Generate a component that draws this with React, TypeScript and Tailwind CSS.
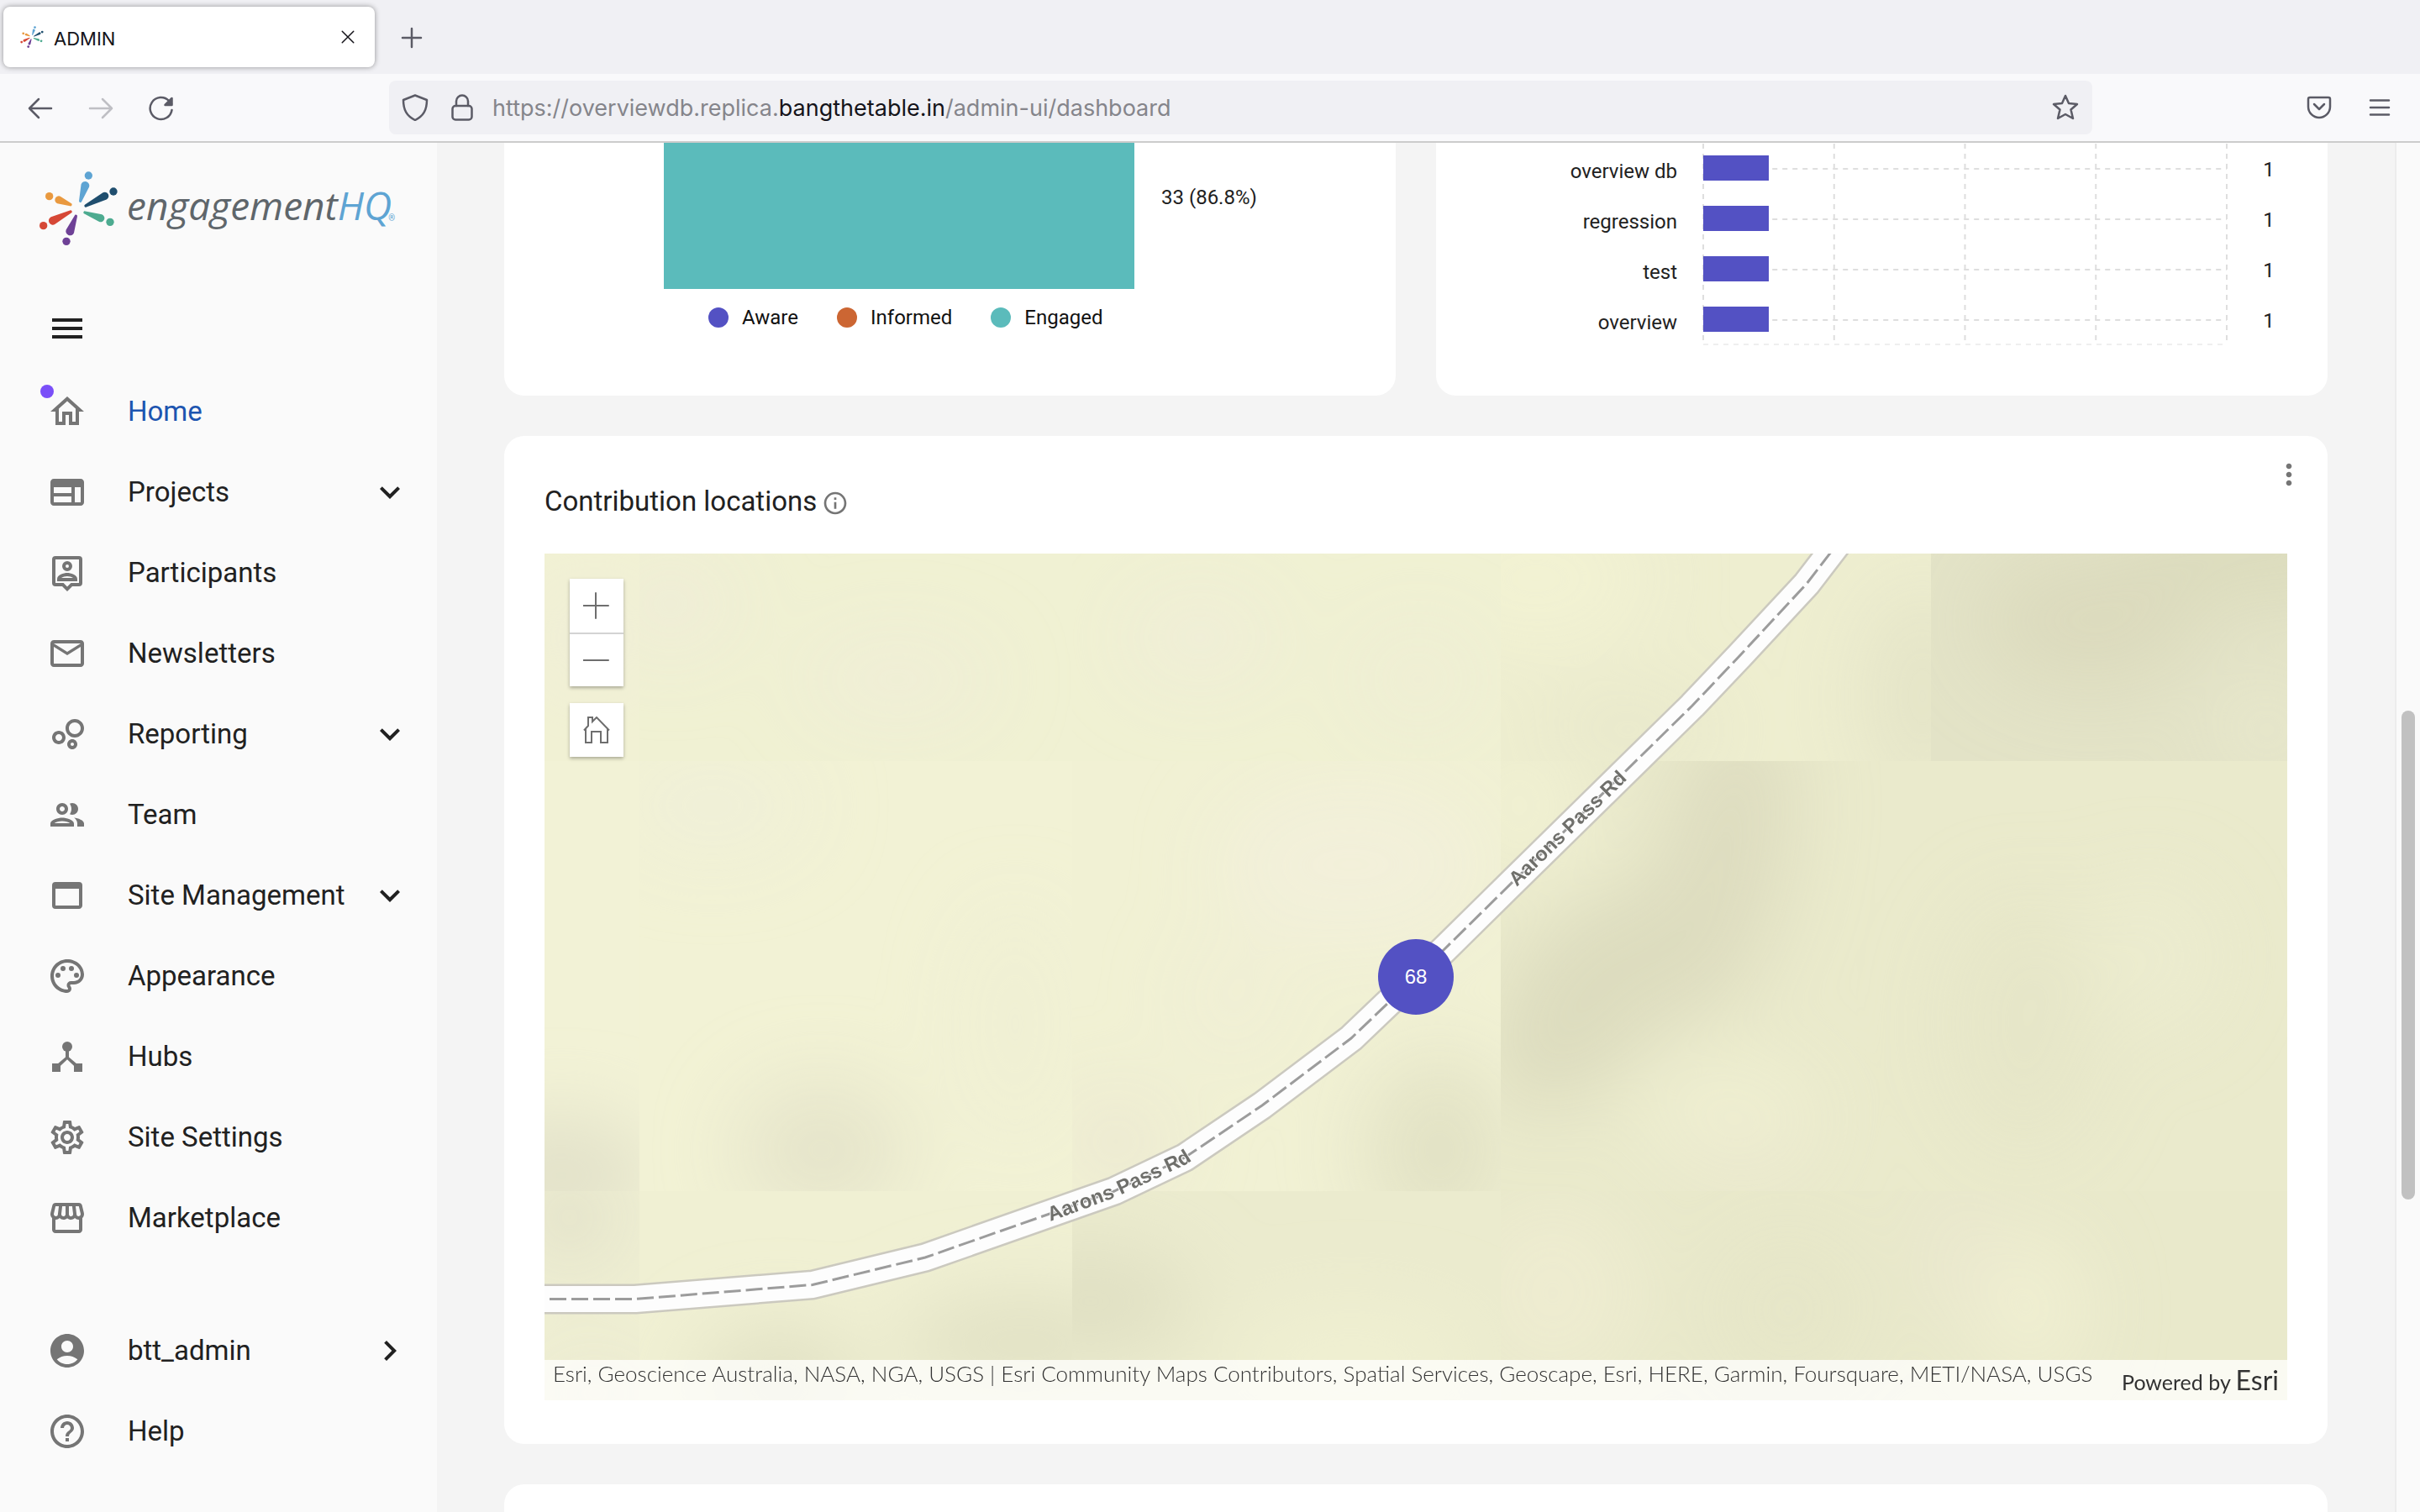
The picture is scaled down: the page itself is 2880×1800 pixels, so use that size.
import type { ReactNode } from "react";
import {
  MdOutlineHome,
  MdOutlineWeb,
  MdMailOutline,
  MdOutlineBubbleChart,
  MdOutlineWebAsset,
  MdOutlinePalette,
  MdOutlineSettings,
  MdOutlineStorefront,
  MdAccountCircle,
  MdHelpOutline,
  MdOutlineInfo,
  MdKeyboardArrowDown,
  MdKeyboardArrowRight,
  MdMenu,
  MdMoreVert,
} from "react-icons/md";

type Petal = { c: string; n: number[]; w: number[]; d: number[] };

const petals: Petal[] = [
  { c: "#5ea4d3", n: [169, 149, 5], w: [186, 94, 15], d: [198, 58] },
  { c: "#1f4e6e", n: [188, 166, 5], w: [256, 131, 14], d: [287, 115] },
  { c: "#4dab90", n: [185, 190, 5], w: [241, 210, 14], d: [275, 224] },
  { c: "#6e4196", n: [153, 203, 5], w: [132, 257, 15], d: [119, 293] },
  { c: "#d64836", n: [134, 187, 5], w: [71, 219, 15], d: [37, 237] },
  { c: "#e9993f", n: [134, 162, 5], w: [92, 145, 14], d: [58, 132] },
];

function petalPath({ n, w }: Petal) {
  const dx = w[0] - n[0];
  const dy = w[1] - n[1];
  const len = Math.hypot(dx, dy);
  const px = -dy / len;
  const py = dx / len;
  return `M${n[0] + px * n[2]} ${n[1] + py * n[2]}L${w[0] + px * w[2]} ${w[1] + py * w[2]}A${w[2]} ${w[2]} 0 0 0 ${w[0] - px * w[2]} ${w[1] - py * w[2]}L${n[0] - px * n[2]} ${n[1] - py * n[2]}A${n[2]} ${n[2]} 0 0 0 ${n[0] + px * n[2]} ${n[1] + py * n[2]}Z`;
}

function Burst({ className }: { className: string }) {
  return (
    <svg viewBox="20 40 285 270" className={className} aria-hidden="true">
      {petals.map((p) => (
        <g key={p.c} fill={p.c}>
          <path d={petalPath(p)} />
          <circle cx={p.d[0]} cy={p.d[1]} r="14" />
        </g>
      ))}
    </svg>
  );
}

function Line({ children, className = "size-8", width = 2.5 }: { children: ReactNode; className?: string; width?: number }) {
  return (
    <svg
      viewBox="0 0 32 32"
      className={className}
      fill="none"
      stroke="currentColor"
      strokeWidth={width}
      strokeLinecap="round"
      strokeLinejoin="round"
      aria-hidden="true"
    >
      {children}
    </svg>
  );
}

function ParticipantsIcon() {
  return (
    <svg viewBox="0 0 24 24" className="size-12" fill="currentColor" aria-hidden="true">
      <path fillRule="evenodd" d="M19 2H5a2 2 0 0 0-2 2v14a2 2 0 0 0 2 2h4l3 3 3-3h4a2 2 0 0 0 2-2V4a2 2 0 0 0-2-2zm0 16h-4.8L12 20.2 9.8 18H5V4h14z" />
      <path fillRule="evenodd" d="M12 11a3 3 0 1 0 0-6 3 3 0 0 0 0 6zm0-4a1 1 0 1 1 0 2 1 1 0 0 1 0-2z" />
      <path fillRule="evenodd" d="M18 15.6c0-2.500-4-3.600-6-3.600s-6 1.100-6 3.600V17h12zM8.500 15c.7-.6 2.300-1 3.500-1s2.800.4 3.500 1z" />
    </svg>
  );
}

function TeamIcon() {
  return (
    <svg viewBox="0 0 24 24" className="size-12" fill="currentColor" aria-hidden="true">
      <path d="M9 13.75c-2.34 0-7 1.17-7 3.5V19h14v-1.75c0-2.33-4.66-3.5-7-3.5zM4.34 17c.84-.58 2.87-1.25 4.66-1.25s3.82.67 4.66 1.25H4.34zM9 12c1.93 0 3.5-1.57 3.5-3.5S10.93 5 9 5 5.5 6.57 5.5 8.5 7.07 12 9 12zm0-5c.83 0 1.5.67 1.5 1.5S9.83 10 9 10s-1.5-.67-1.5-1.5S8.17 7 9 7zm7.04 6.81c1.16.84 1.96 1.96 1.96 3.44V19h4v-1.75c0-2.02-3.5-3.17-5.96-3.44zM15 12c1.93 0 3.5-1.57 3.5-3.5S16.93 5 15 5c-.54 0-1.04.13-1.5.35.63.89 1 1.98 1 3.15s-.37 2.26-1 3.15c.46.22.96.35 1.5.35z" />
    </svg>
  );
}

function HubsIcon() {
  return (
    <svg viewBox="0 0 24 24" className="size-12" fill="currentColor" aria-hidden="true">
      <circle cx="12" cy="6" r="3" />
      <rect x="3" y="16" width="5" height="5" />
      <rect x="16" y="16" width="5" height="5" />
      <path d="M11 8h2v4.200l5 4.300-1.400 1.500L12 13.600 7.400 18 6 16.500l5-4.300z" />
    </svg>
  );
}

type NavEntry = { label: string; icon: ReactNode; arrow?: "down" | "right"; active?: boolean };

const ic = "size-12";

const mainNav: NavEntry[] = [
  { label: "Home", icon: <MdOutlineHome className={ic} />, active: true },
  { label: "Projects", icon: <MdOutlineWeb className={ic} />, arrow: "down" },
  { label: "Participants", icon: <ParticipantsIcon /> },
  { label: "Newsletters", icon: <MdMailOutline className={ic} /> },
  { label: "Reporting", icon: <MdOutlineBubbleChart className={ic} />, arrow: "down" },
  { label: "Team", icon: <TeamIcon /> },
  { label: "Site Management", icon: <MdOutlineWebAsset className={ic} />, arrow: "down" },
  { label: "Appearance", icon: <MdOutlinePalette className={ic} /> },
  { label: "Hubs", icon: <HubsIcon /> },
  { label: "Site Settings", icon: <MdOutlineSettings className={ic} /> },
  { label: "Marketplace", icon: <MdOutlineStorefront className={ic} /> },
];

const footNav: NavEntry[] = [
  { label: "btt_admin", icon: <MdAccountCircle className={ic} />, arrow: "right" },
  { label: "Help", icon: <MdHelpOutline className={ic} /> },
];

function NavList({ items }: { items: NavEntry[] }) {
  return (
    <ul>
      {items.map((it) => (
        <li key={it.label}>
          <a href="#" className="flex h-24 items-center pr-8 pl-14">
            <span className="relative text-[#757575]">
              {it.icon}
              {it.active && <span className="absolute -top-2 -left-2 size-4 rounded-full bg-[#7a4ff8]" />}
            </span>
            <span className={`ml-12 grow text-[33px] leading-10 whitespace-nowrap ${it.active ? "text-[#1d55b0]" : "text-[#212121]"}`}>
              {it.label}
            </span>
            {it.arrow === "down" && <MdKeyboardArrowDown className="size-12 text-[#212121]" />}
            {it.arrow === "right" && <MdKeyboardArrowRight className="size-12 text-[#212121]" />}
          </a>
        </li>
      ))}
    </ul>
  );
}

function BrowserChrome() {
  return (
    <header className="shrink-0 border-b-2 border-[#cccccc] font-['Inter',sans-serif] text-[#5b5b66]">
      <div className="flex h-22 items-center bg-[#f0f0f4] px-1">
        <div className="flex h-18 w-[442px] items-center rounded-lg bg-white px-5 shadow-[0_0_6px_rgba(0,0,0,0.4)]">
          <Burst className="size-7" />
          <span className="ml-3 grow pt-1 text-[22px] leading-7 text-[#15141a]">ADMIN</span>
          <button type="button" aria-label="Close tab" className="text-[#15141a]">
            <Line className="size-6" width={2}>
              <path d="M7 7l18 18M25 7L7 25" />
            </Line>
          </button>
        </div>
        <button type="button" aria-label="New tab" className="ml-7 pt-0.5">
          <Line>
            <path d="M16 5v22M5 16h22" />
          </Line>
        </button>
      </div>
      <div className="flex h-20 items-center bg-[#f9f9fb] px-8">
        <div className="flex w-[431px] gap-10 pt-0.5">
          <button type="button" aria-label="Back">
            <Line>
              <path d="M29 16H3M14 5L3 16l11 11" />
            </Line>
          </button>
          <button type="button" aria-label="Forward" className="text-[#bfbfc4]">
            <Line>
              <path d="M3 16h26M18 5l11 11-11 11" />
            </Line>
          </button>
          <button type="button" aria-label="Reload">
            <Line>
              <path d="M28.500 18A13 13 0 1 1 25 7l3 3.500" />
              <path d="M28.500 4v8h-8z" fill="currentColor" />
            </Line>
          </button>
        </div>
        <div className="flex h-16 grow items-center rounded-lg bg-[#f0f0f4] pr-4 pl-[15px]">
          <Line>
            <path d="M16 1.500L30 7c0 12-4 19-14 24C6 26 2 19 2 7z" />
          </Line>
          <Line className="ml-6 size-8">
            <path d="M9 14V8.500a7 7 0 0 1 14 0V14" />
            <rect x="4.500" y="14" width="23" height="16.500" rx="3.500" />
          </Line>
          <a href="#" className="ml-5 grow pt-0.5 text-[27px] leading-8 text-[#85858b]">
            https://overviewdb.replica.<span className="text-[#15141a]">bangthetable.in</span>/admin-ui/dashboard
          </a>
          <button type="button" aria-label="Bookmark this page">
            <Line>
              <path d="M16 2l4 9 10 1-7.500 6.500L25 29l-9-5-9 5 2.500-10.500L2 12l10-1z" />
            </Line>
          </button>
        </div>
        <div className="ml-[254px] flex gap-10">
          <button type="button" aria-label="Save to Pocket">
            <Line>
              <path d="M3 6a2 2 0 0 1 2-2h22a2 2 0 0 1 2 2v9a13 13 0 0 1-26 0z" />
              <path d="M10 12l6 6 6-6" />
            </Line>
          </button>
          <button type="button" aria-label="Open menu">
            <Line>
              <path d="M5 7.500h22M5 16h22M5 24.500h22" />
            </Line>
          </button>
        </div>
      </div>
    </header>
  );
}

const legend = [
  { label: "Aware", dot: "bg-[#5351c3]" },
  { label: "Informed", dot: "bg-[#cc6633]" },
  { label: "Engaged", dot: "bg-[#5bbbbb]" },
];

function FunnelCard() {
  return (
    <section className="rounded-b-3xl bg-white pb-[79px] pl-[190px] text-[24px] leading-7">
      <div className="flex items-center">
        <div className="h-[218px] w-[560px] bg-[#5bbbbb]" />
        <span className="ml-8 text-[#212121]">33 (86.8%)</span>
      </div>
      <ul className="mt-5 ml-[53px] flex gap-[46px] text-[#111111]">
        {legend.map((l) => (
          <li key={l.label} className="flex items-center gap-4">
            <span className={`size-6 rounded-full ${l.dot}`} />
            {l.label}
          </li>
        ))}
      </ul>
    </section>
  );
}

const tags = [
  { label: "overview db", count: 1 },
  { label: "regression", count: 1 },
  { label: "test", count: 1 },
  { label: "overview", count: 1 },
];

function TagsCard() {
  return (
    <section className="grid grid-cols-[287px_minmax(0,1fr)_120px] rounded-b-3xl bg-white pt-11 text-[24px] leading-7 text-[#212121]">
      <ul className="text-right">
        {tags.map((t) => (
          <li key={t.label} className="flex h-15 items-center justify-end pt-2">
            {t.label}
          </li>
        ))}
      </ul>
      <div className="relative ml-[31px] h-60">
        <svg className="absolute inset-0 size-full overflow-visible" stroke="#dedede" aria-hidden="true">
          {[0, 25, 50, 75, 100].map((x) => (
            <line key={x} x1={`${x}%`} x2={`${x}%`} y1="1" y2="240" strokeWidth="2" strokeDasharray="6 6" />
          ))}
          {[31, 91, 151, 211].map((y) => (
            <line key={y} x1="13.200%" x2="100%" y1={y} y2={y} strokeWidth="2" strokeDasharray="6 6" />
          ))}
          <line x1="0" x2="100%" y1="240" y2="240" strokeWidth="1" strokeDasharray="6 6" />
        </svg>
        {tags.map((t) => (
          <div key={t.label} className="relative flex h-15 items-center">
            <div className="h-[30px] bg-[#5351c3]" style={{ width: `${(t.count / 8) * 100}%` }} />
          </div>
        ))}
      </div>
      <ul className="pr-5 text-center">
        {tags.map((t) => (
          <li key={t.label} className="flex h-15 items-center justify-center pt-1">
            {t.count}
          </li>
        ))}
      </ul>
    </section>
  );
}

const ROAD =
  "M-20 887.500L108 887.500L319 870.500L453 838L678 759L762 719L854 657L960 577L1071 471L1145 398L1366 181L1423 121L1502 36L1545 -20";

type Shade = [number, number, number, number, string, number, number?];

const tileShades: { x: number; y: number; w: number; h: number; fill: string; spots: Shade[] }[] = [
  { x: 0, y: 0, w: 113, h: 247, fill: "#f1f1d4", spots: [[60, 100, 70, 60, "#efecd8", 0.7]] },
  { x: 113, y: 0, w: 515, h: 247, fill: "#f0f1d3", spots: [[150, 60, 80, 60, "#efecd8", 0.8], [420, 150, 110, 50, "#f0edd8", 0.7]] },
  { x: 628, y: 0, w: 510, h: 247, fill: "#f0f1d3", spots: [[780, 100, 90, 60, "#f0edd8", 0.7], [1040, 150, 80, 70, "#efecd6", 0.6]] },
  { x: 1138, y: 0, w: 512, h: 247, fill: "#eeeed0", spots: [[1180, 30, 130, 80, "#f2f2d3", 1], [1290, 210, 100, 40, "#e7e7ca", 0.9], [1640, 170, 70, 130, "#e4e4c7", 1]] },
  { x: 1650, y: 0, w: 424, h: 247, fill: "#e3e3c7", spots: [[1840, 80, 130, 80, "#dbdabd", 1], [2050, 0, 160, 50, "#dadabb", 1], [2050, 210, 70, 60, "#e9e9cd", 0.8]] },
  { x: 0, y: 247, w: 113, h: 512, fill: "#f2f2d6", spots: [[20, 740, 110, 70, "#e2e1c9", 1]] },
  { x: 113, y: 247, w: 515, h: 512, fill: "#f2f2d5", spots: [[200, 300, 110, 60, "#f0efd8", 0.9], [330, 710, 100, 80, "#e5e4ca", 1], [560, 560, 60, 140, "#efefd3", 0.8]] },
  { x: 628, y: 247, w: 510, h: 512, fill: "#f1f1d4", spots: [[960, 370, 160, 100, "#f2efda", 0.9], [820, 530, 60, 70, "#f0eed6", 0.7], [1065, 710, 90, 110, "#e2e2c5", 1], [680, 700, 70, 60, "#ece9d2", 0.9]] },
  { x: 1138, y: 247, w: 936, h: 512, fill: "#eaeacc", spots: [[1160, 300, 80, 100, "#f0f0d2", 1], [1400, 370, 75, 190, "#dddcbf", 1, 12], [1240, 530, 85, 150, "#dcdbbe", 1, 38], [1410, 660, 110, 60, "#efefd1", 0.9], [1760, 560, 90, 150, "#e6e6c8", 0.9], [1910, 480, 80, 90, "#ededd0", 0.7], [1430, 720, 80, 30, "#ebe7d0", 0.8]] },
  { x: 0, y: 759, w: 113, h: 249, fill: "#efefd3", spots: [[30, 790, 60, 60, "#e2e1c9", 1], [60, 1000, 80, 30, "#e9e7cf", 0.9]] },
  { x: 113, y: 759, w: 515, h: 249, fill: "#f0f0d3", spots: [[280, 990, 100, 70, "#e1e1c4", 1], [570, 940, 150, 60, "#e1e1c4", 1]] },
  { x: 628, y: 759, w: 510, h: 249, fill: "#ebebce", spots: [[650, 890, 120, 60, "#dfdfc2", 1], [960, 960, 150, 60, "#f0f0d2", 1]] },
  { x: 1138, y: 759, w: 936, h: 249, fill: "#e9e9cb", spots: [[1200, 880, 100, 110, "#eeecd0", 0.9], [1480, 900, 90, 90, "#e5e5c8", 0.9], [1770, 900, 60, 90, "#f0efd2", 1], [1680, 830, 25, 90, "#ebe7d1", 0.9]] },
];

function MapCanvas() {
  return (
    <svg viewBox="0 0 2074 1008" preserveAspectRatio="xMidYMid slice" className="absolute inset-0 size-full" role="img" aria-label="Map of Aarons Pass Rd">
      <defs>
        <filter id="soft" filterUnits="userSpaceOnUse" x="-300" y="-300" width="2700" height="1600">
          <feGaussianBlur stdDeviation="46" />
        </filter>
        {tileShades.map((t, i) => (
          <clipPath key={i} id={`tile${i}`}>
            <rect x={t.x} y={t.y} width={t.w} height={t.h} />
          </clipPath>
        ))}
        <path id="labelLow" d="M602 795L678 767L762 728L800 704" />
        <path id="labelHigh" d="M1157 397L1377 183" />
      </defs>
      {tileShades.map((t, i) => (
        <g key={i} clipPath={`url(#tile${i})`}>
          <rect x={t.x} y={t.y} width={t.w} height={t.h} fill={t.fill} />
          <g filter="url(#soft)">
            {t.spots.map(([cx, cy, rx, ry, fill, opacity, rot = 0], j) => (
              <ellipse key={j} cx={cx} cy={cy} rx={rx} ry={ry} fill={fill} opacity={opacity} transform={`rotate(${rot} ${cx} ${cy})`} />
            ))}
          </g>
        </g>
      ))}
      <path d={ROAD} fill="none" stroke="#cbc9bf" strokeWidth="36" strokeLinejoin="round" />
      <path d={ROAD} fill="none" stroke="#fdfdfd" strokeWidth="31" strokeLinejoin="round" />
      <path d={ROAD} fill="none" stroke="#9c9c9c" strokeWidth="3" strokeDasharray="20 6" />
      <g fill="#6f6f6b" stroke="#fdfdfd" strokeWidth="2" paintOrder="stroke" className="font-['Liberation_Sans',sans-serif] text-[24px] font-bold">
        <text>
          <textPath href="#labelLow">Aarons Pass Rd</textPath>
        </text>
        <text>
          <textPath href="#labelHigh">Aarons Pass Rd</textPath>
        </text>
      </g>
    </svg>
  );
}

const mapButton = "flex h-16 w-16 items-center justify-center bg-white";

function MapCard() {
  return (
    <section className="relative mt-12 rounded-3xl bg-white px-12 pt-12 pb-13">
      <button type="button" aria-label="More options" className="absolute top-[26px] right-[26px] text-[#757575]">
        <MdMoreVert className="size-10" />
      </button>
      <div className="flex h-15 items-center">
        <h2 className="text-[33px] leading-10 text-[#212121]">Contribution locations</h2>
        <MdOutlineInfo className="mt-1 ml-1.5 size-8 text-[#757575]" />
      </div>
      <div className="relative mt-8 flex h-[1008px] flex-col justify-between overflow-hidden">
        <MapCanvas />
        <div className="relative ml-[30px] flex w-16 flex-col pt-[30px] text-[#6e6e6e]">
          <div className="shadow-[0_2px_4px_rgba(0,0,0,0.3)]">
            <button type="button" aria-label="Zoom in" className={mapButton}>
              <Line width={2}>
                <path d="M15 1v30M0 16h30" />
              </Line>
            </button>
            <button type="button" aria-label="Zoom out" className="flex h-16 w-16 items-center justify-center border-t-2 border-[#d3d3d3] bg-white">
              <Line width={2}>
                <path d="M0 16h30" />
              </Line>
            </button>
          </div>
          <button type="button" aria-label="Default map view" className="mt-5 flex h-16 w-16 items-center justify-center bg-white shadow-[0_2px_4px_rgba(0,0,0,0.3)]">
            <svg viewBox="0 0 32 32" className="size-8" fill="none" stroke="currentColor" strokeWidth="2" aria-hidden="true">
              <path d="M1 16.500L6 11V1h5v5l5-5 15 15.500M3 15v16h7V18h11v13h8V14" />
            </svg>
          </button>
        </div>
        <button
          type="button"
          aria-label="68 contributions"
          className="absolute top-1/2 left-1/2 flex size-[90px] -translate-1/2 items-center justify-center rounded-full bg-[#5351c3] font-['Liberation_Sans',sans-serif] text-[24px] leading-7 text-white"
        >
          68
        </button>
        <div className="relative flex h-12 justify-between bg-white/75 px-[10px] font-['Lato',sans-serif] text-[#323232]">
          <span className="text-[26px] leading-8 font-light whitespace-nowrap">
            Esri, Geoscience Australia, NASA, NGA, USGS | Esri Community Maps Contributors, Spatial Services, Geoscape, Esri, HERE, Garmin, Foursquare, METI/NASA, USGS
          </span>
          <span className="text-[25px] leading-12 whitespace-nowrap">
            Powered by{" "}
            <a href="#" className="text-[32px]">
              Esri
            </a>
          </span>
        </div>
      </div>
    </section>
  );
}

export default function App() {
  return (
    <div className="flex h-screen flex-col overflow-hidden bg-[#f4f4f4] font-['Roboto',sans-serif]">
      <BrowserChrome />
      <div className="flex min-h-0 grow">
        <nav className="w-[520px] shrink-0 bg-[#fafafa] pt-8" aria-label="Main">
          <a href="#" className="flex h-24 items-center pb-1 pl-[46px]" aria-label="engagementHQ home">
            <Burst className="h-[90px] w-[95px]" />
            <span className="ml-2.5 pb-2 font-['Open_Sans',sans-serif] text-[46px] leading-none font-medium whitespace-nowrap text-[#5f666b] italic">
              engagement<span className="text-[#5ea4d3]">HQ</span>
            </span>
            <span className="mt-6 -ml-1 text-[10px] leading-none text-[#5ea4d3]">®</span>
          </a>
          <button type="button" aria-label="Collapse menu" className="mt-[69px] mb-[27px] ml-14 block text-[#212121]">
            <MdMenu className="size-12" />
          </button>
          <NavList items={mainNav} />
          <div className="mt-[62px]">
            <NavList items={footNav} />
          </div>
        </nav>
        <main className="min-w-0 grow overflow-hidden px-20">
          <div className="-mt-11 grid grid-cols-2 gap-12">
            <FunnelCard />
            <TagsCard />
          </div>
          <MapCard />
          <section className="mt-12 h-40 rounded-3xl bg-white" aria-label="Next report" />
        </main>
        <div className="flex w-[30px] shrink-0 justify-center border-l-2 border-[#ececec] bg-[#fafafa]" aria-hidden="true">
          <div className="mt-[676px] h-[582px] w-4 rounded-full bg-[#c1c1c1]" />
        </div>
      </div>
    </div>
  );
}
